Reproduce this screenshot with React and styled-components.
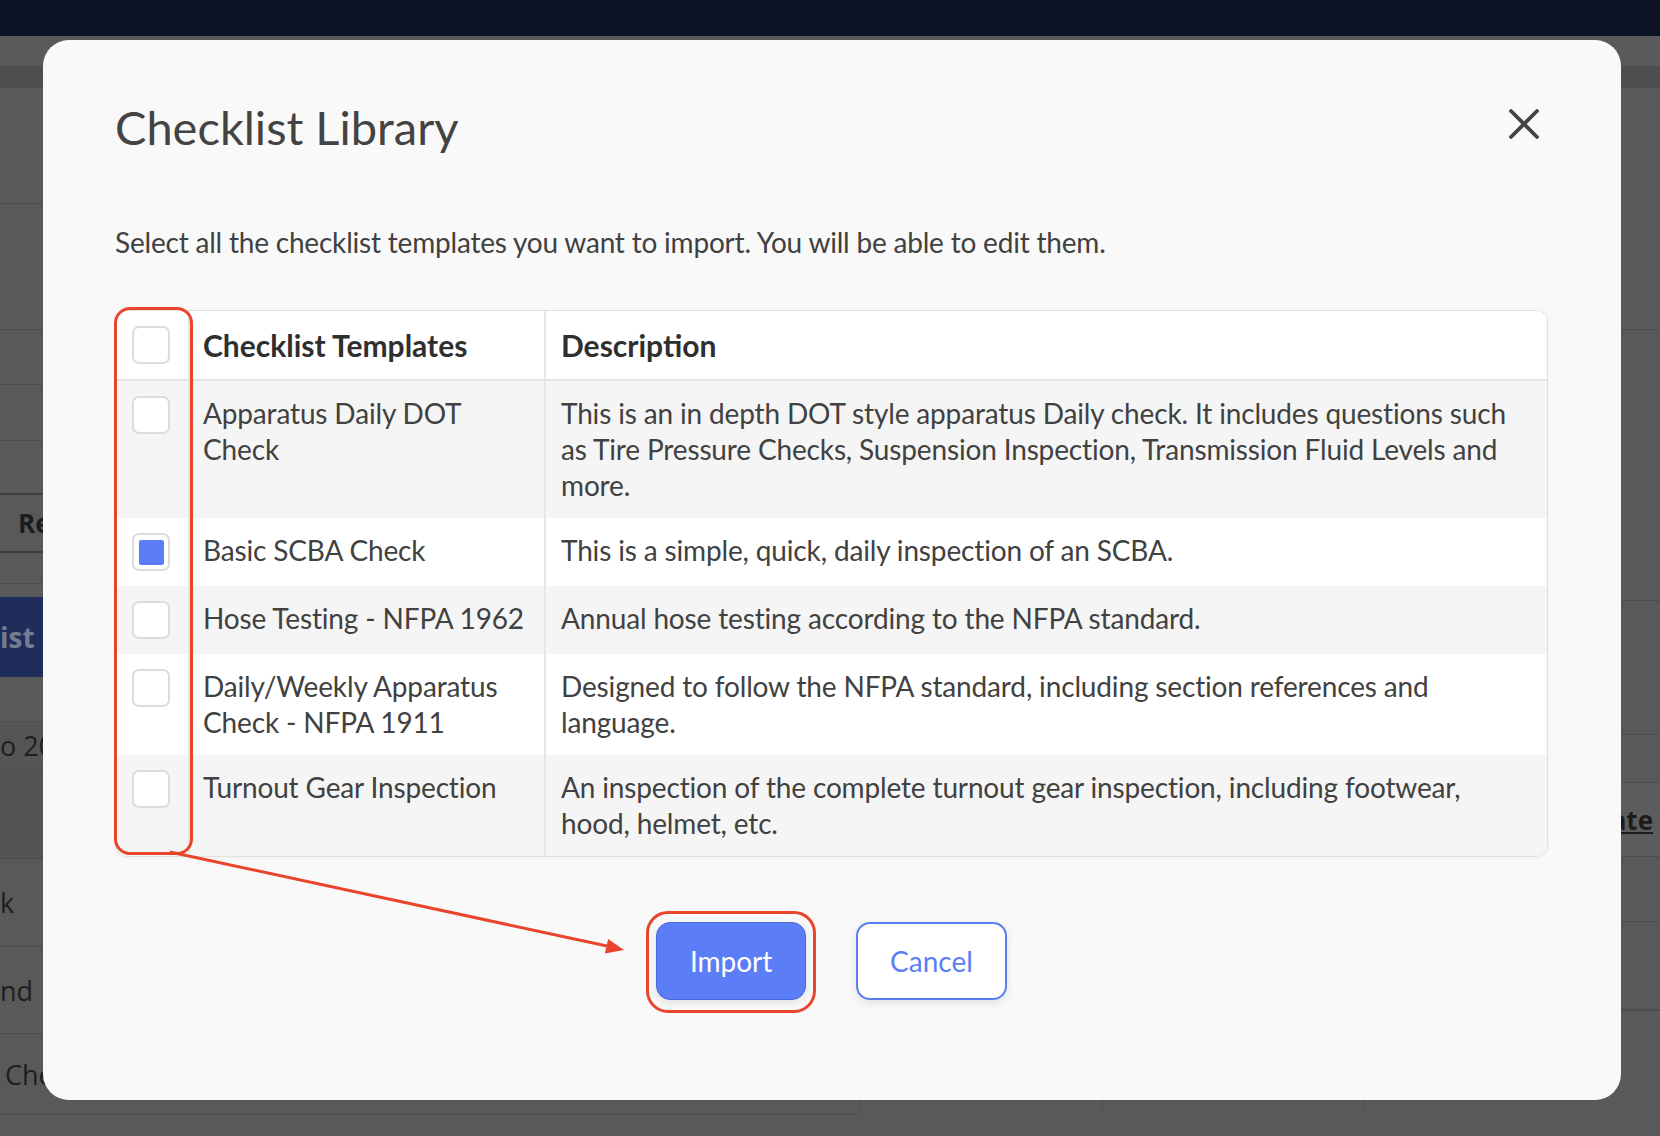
import React from 'react';
import styled, { createGlobalStyle } from 'styled-components';

const GlobalStyle = createGlobalStyle`
  html, body {
    margin: 0;
    padding: 0;
  }
  body {
    width: 1660px;
    height: 1136px;
    overflow: hidden;
    background: #595959;
    font-family: Lato, "Open Sans", sans-serif;
  }
  * {
    box-sizing: border-box;
  }
`;

const templates = [
  {
    name: 'Apparatus Daily DOT Check',
    description: 'This is an in depth DOT style apparatus Daily check. It includes questions such as Tire Pressure Checks, Suspension Inspection, Transmission Fluid Levels and more.',
    checked: false
  },
  {
    name: 'Basic SCBA Check',
    description: 'This is a simple, quick, daily inspection of an SCBA.',
    checked: true
  },
  {
    name: 'Hose Testing - NFPA 1962',
    description: 'Annual hose testing according to the NFPA standard.',
    checked: false
  },
  {
    name: 'Daily/Weekly Apparatus Check - NFPA 1911',
    description: 'Designed to follow the NFPA standard, including section references and language.',
    checked: false
  },
  {
    name: 'Turnout Gear Inspection',
    description: 'An inspection of the complete turnout gear inspection, including footwear, hood, helmet, etc.',
    checked: false
  }
];

/* ---------- dimmed page behind the dialog ---------- */

const Page = styled.div`
  position: relative;
  width: 1660px;
  height: 1136px;
  overflow: hidden;
  background: #595959;
  font-family: "Open Sans", sans-serif;
`;

const TopBar = styled.div`
  height: 36px;
  background: #0c1324;
`;

const SubBar = styled.div`
  height: 52px;
  background: #5a5a5a;
  border-bottom: 22px solid #4f4f4f;
`;

const PageBody = styled.div`
  display: grid;
  grid-template-columns: 859px 1fr;
`;

const PageColumn = styled.div`
  display: flex;
  flex-direction: column;
`;

const BgRow = styled.div`
  height: ${p => p.$h}px;
  flex-shrink: 0;
  background: ${p => p.$bg || '#595959'};
  border-bottom: ${p => p.$line || '1px solid #4d4d4d'};
  display: flex;
  align-items: ${p => p.$align || 'center'};
  justify-content: ${p => p.$right ? 'flex-end' : 'flex-start'};
  padding: ${p => p.$pad || '0'};
  color: #1e1e1e;
  font-size: 27px;
`;

const BgStrong = styled.span`
  font-weight: 700;
  font-size: 26px;
  color: #1c1c1c;
  text-decoration: ${p => p.$underline ? 'underline' : 'none'};
`;

const BgButton = styled.div`
  width: 320px;
  height: 80px;
  background: #1f2d5b;
  color: #767c90;
  font-weight: 700;
  font-size: 28px;
  display: flex;
  align-items: center;
`;

const BgCells = styled.div`
  display: grid;
  grid-template-columns: 243px 262px 1fr;
  height: 100px;
  border-top: 1px solid #4d4d4d;
`;

const BgCell = styled.div`
  border-left: 1px solid #4d4d4d;
`;

/* ---------- dialog ---------- */

const Overlay = styled.div`
  position: absolute;
  inset: 0;
  padding: 40px 0 0 43px;
`;

const Modal = styled.div`
  position: relative;
  width: 1578px;
  height: 1060px;
  background: #f9f9f9;
  border-radius: 26px;
  padding: 61px 73px 0 72px;
  font-family: Lato, "Open Sans", sans-serif;
  color: #444;
`;

const Header = styled.div`
  display: flex;
  justify-content: space-between;
  align-items: flex-start;
`;

const Title = styled.h1`
  margin: 0;
  font-size: 47px;
  line-height: 52px;
  font-weight: 400;
  color: #434343;
`;

const CloseButton = styled.button`
  width: 32px;
  height: 32px;
  margin: 7px 8px 0 0;
  padding: 0;
  border: none;
  background: none;
  color: #444;
  cursor: pointer;

  svg {
    display: block;
  }
`;

const Intro = styled.p`
  margin: 71px 0 0;
  font-size: 28px;
  line-height: 36px;
  letter-spacing: -0.2px;
  color: #414141;
`;

const TableWrap = styled.div`
  position: relative;
  margin-top: 50px;
`;

const TableFrame = styled.div`
  border: 1px solid #e0e0e0;
  border-radius: 12px;
  overflow: hidden;
  background: #fff;
  box-shadow: 0 1px 4px rgba(0, 0, 0, 0.04);
`;

const Row = styled.div`
  display: grid;
  grid-template-columns: 72px 356px 1fr;
  background: ${p => p.$striped ? '#f5f5f5' : '#ffffff'};
  border-bottom: ${p => p.$head ? '2px solid #e4e4e4' : 'none'};
`;

const Cell = styled.div`
  padding: ${p => p.$head ? '16px 14px 16px 15px' : '14px 14px 15px 15px'};
  font-size: ${p => p.$head ? '30px' : '28px'};
  line-height: 36px;
  font-weight: ${p => p.$head ? 700 : 400};
  letter-spacing: ${p => p.$head ? '0' : '-0.15px'};
  color: ${p => p.$head ? '#2f2f2f' : '#414141'};
  border-left: 2px solid #e6e6e6;

  &:nth-child(2) {
    padding-left: 13px;
  }
`;

const CheckCell = styled.div`
  padding: 15px 2px 15px 0;
  display: flex;
  justify-content: center;
  align-items: flex-start;
`;

const Checkbox = styled.span`
  width: 38px;
  height: 38px;
  border: 2px solid #dcdcdc;
  border-radius: 7px;
  background: #fff;
  display: flex;
  align-items: center;
  justify-content: center;
`;

const CheckMark = styled.span`
  width: 25px;
  height: 25px;
  border-radius: 2px;
  background: #5b7ef6;
`;

const ColumnHighlight = styled.div`
  position: absolute;
  left: -1px;
  top: -3px;
  width: 79px;
  height: 548px;
  border: 3px solid #e8452c;
  border-radius: 16px;
  pointer-events: none;
`;

const Actions = styled.div`
  display: flex;
  justify-content: center;
  gap: 50px;
  margin-top: 65px;
`;

const Button = styled.button`
  position: relative;
  height: 78px;
  min-width: 150px;
  padding: 0 32px;
  border-radius: 14px;
  font-family: Lato, "Open Sans", sans-serif;
  font-size: 28px;
  cursor: pointer;
  box-shadow: 0 3px 9px rgba(0, 0, 0, 0.1);
  border: ${p => p.$primary ? '1px solid #4a69d9' : '2px solid #5b7ef6'};
  background: ${p => p.$primary ? '#5b7ef6' : '#ffffff'};
  color: ${p => p.$primary ? '#ffffff' : '#5b7ef6'};

  ${p => p.$marked && `
    &::before {
      content: "";
      position: absolute;
      inset: -12px -11px -14px -11px;
      border: 3px solid #e8452c;
      border-radius: 22px;
      pointer-events: none;
    }
  `}
`;

const Annotation = styled.svg`
  position: absolute;
  left: 0;
  top: 0;
  pointer-events: none;
`;

function CloseIcon() {
  return (
    <svg width="32" height="32" viewBox="0 0 32 32">
      <path d="M3 3 L29 29 M29 3 L3 29" stroke="currentColor" strokeWidth="3.8" strokeLinecap="round" fill="none" />
    </svg>
  );
}

function Background() {
  return (
    <>
      <TopBar />
      <SubBar />
      <PageBody>
        <PageColumn>
          <BgRow $h={116} />
          <BgRow $h={126} />
          <BgRow $h={55} />
          <BgRow $h={56} />
          <BgRow $h={54} $line="2px solid #3e3e3e" />
          <BgRow $h={58} $pad="0 0 0 18px" $line="2px solid #3e3e3e"><BgStrong>Recurring</BgStrong></BgRow>
          <BgRow $h={31} />
          <BgRow $h={138} $align="flex-start" $pad="13px 0 0 0"><BgButton>ist</BgButton></BgRow>
          <BgRow $h={48} $bg="#555555">o 20</BgRow>
          <BgRow $h={89} $bg="#545454" />
          <BgRow $h={88}>k</BgRow>
          <BgRow $h={87}>nd</BgRow>
          <BgRow $h={81} $pad="0 0 0 5px">Check</BgRow>
          <BgRow $h={40} $line="none" />
        </PageColumn>
        <PageColumn>
          <BgRow $h={242} />
          <BgRow $h={271} />
          <BgRow $h={134} />
          <BgRow $h={48} />
          <BgRow $h={74} $bg="#5c5c5c" $right $pad="0 7px 0 0"><BgStrong $underline>Update</BgStrong></BgRow>
          <BgRow $h={65} />
          <BgRow $h={88} />
          <BgCells>
            <BgCell />
            <BgCell />
            <BgCell />
          </BgCells>
        </PageColumn>
      </PageBody>
    </>
  );
}

export default function App() {
  return (
    <>
      <GlobalStyle />
      <Page>
        <Background />
        <Overlay>
          <Modal>
            <Header>
              <Title>Checklist Library</Title>
              <CloseButton aria-label="Close"><CloseIcon /></CloseButton>
            </Header>
            <Intro>Select all the checklist templates you want to import. You will be able to edit them.</Intro>
            <TableWrap>
              <TableFrame>
                <Row $head>
                  <CheckCell><Checkbox /></CheckCell>
                  <Cell $head>Checklist Templates</Cell>
                  <Cell $head>Description</Cell>
                </Row>
                {templates.map((item, index) => (
                  <Row key={item.name} $striped={index % 2 === 0}>
                    <CheckCell>
                      <Checkbox>{item.checked && <CheckMark />}</Checkbox>
                    </CheckCell>
                    <Cell>{item.name}</Cell>
                    <Cell>{item.description}</Cell>
                  </Row>
                ))}
              </TableFrame>
              <ColumnHighlight />
            </TableWrap>
            <Actions>
              <Button $primary $marked>Import</Button>
              <Button>Cancel</Button>
            </Actions>
            <Annotation width="1578" height="1060" viewBox="0 0 1578 1060">
              <line x1="127" y1="812" x2="564" y2="906" stroke="#e8452c" strokeWidth="3" />
              <polygon points="581,910 561.9,913.5 565.1,899" fill="#e8452c" />
            </Annotation>
          </Modal>
        </Overlay>
      </Page>
    </>
  );
}
